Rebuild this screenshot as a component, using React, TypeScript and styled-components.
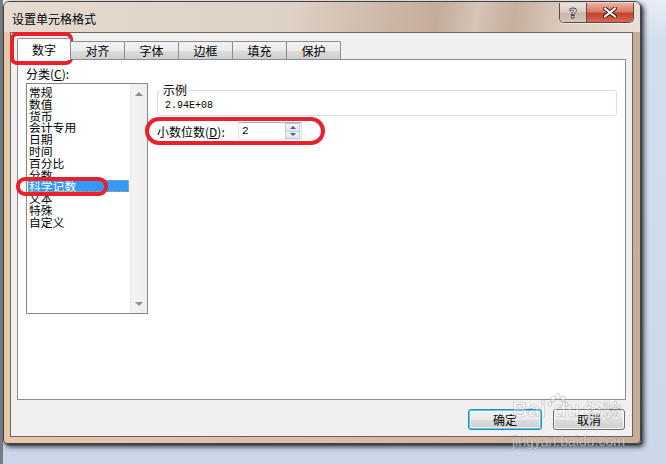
import React from "react";
import styled, { createGlobalStyle } from "styled-components";

const cjk = `"Noto Sans CJK SC", "Liberation Sans", sans-serif`;

const GlobalStyle = createGlobalStyle`
  html, body {
    margin: 0;
    padding: 0;
    background: #cdd9ea;
  }
  body {
    font-family: ${cjk};
    font-size: 12px;
    color: #000;
  }
  * {
    box-sizing: border-box;
  }
`;

const Desktop = styled.div`
  position: relative;
  width: 666px;
  height: 464px;
  overflow: hidden;
  padding: 1px 0 0 3px;
  background: linear-gradient(to right, #757c85 0 3px, transparent 3px),
    linear-gradient(to bottom, #e8edf4 0, #d3deed 40px, #cbd7e9 100%);
`;

const Window = styled.div`
  width: 638px;
  height: 443px;
  display: flex;
  flex-direction: column;
  border: 1px solid #4b403a;
  border-radius: 6px 6px 4px 4px;
  background: linear-gradient(to right, #e6c8aa 0, #d9bfa9 50%, #c8ad99 100%);
  box-shadow: 3px 3px 5px rgba(25, 30, 45, 0.8), 1px 1px 2px rgba(25, 30, 45, 0.6);
`;

const TitleBar = styled.div`
  height: 30px;
  display: flex;
  align-items: flex-start;
  padding: 0 6px 0 8px;
  border-radius: 5px 5px 0 0;
  background: linear-gradient(
    100deg,
    #e6dbd1 0%,
    #ded1c5 45%,
    #cdb8a8 60%,
    #c4ac9a 68%,
    #d6c4b6 74%,
    #c6af9d 80%,
    #dccdc0 88%,
    #e9e0d8 100%
  );
`;

const Title = styled.div`
  padding-top: 9px;
  font-size: 12px;
  line-height: 16px;
  color: #000;
`;

const CaptionGroup = styled.div`
  margin-left: auto;
  margin-top: 1px;
  display: flex;
  height: 20px;
  border: 1px solid #5b4a40;
  border-top: none;
  border-radius: 0 0 5px 5px;
  overflow: hidden;
  box-shadow: 0 1px 0 rgba(255, 255, 255, 0.5);
`;

const CaptionButton = styled.div<{ $close?: boolean }>`
  width: ${(p) => (p.$close ? 47 : 26)}px;
  display: flex;
  align-items: center;
  justify-content: center;
  border-left: ${(p) => (p.$close ? "1px solid #5b4a40" : "none")};
  background: ${(p) =>
    p.$close
      ? "linear-gradient(to bottom, #eab1a4 0%, #d9796a 45%, #c4402f 55%, #d56a52 100%)"
      : "linear-gradient(to bottom, #ece4dd 0%, #d9cdc3 45%, #c9b8aa 55%, #d4c6ba 100%)"};
`;

const HelpGlyph = styled.span`
  font-family: "DejaVu Sans", sans-serif;
  font-weight: bold;
  font-size: 14px;
  line-height: 14px;
  color: #fff;
  -webkit-text-stroke: 0.8px #3c3c44;
`;

const Client = styled.div`
  flex: 1;
  margin: 0 7px 6px 6px;
  border: 1px solid #6e625a;
  background: #f0f0f0;
  display: flex;
  flex-direction: column;
  padding: 5px 6px 0 6px;
`;

const TabRow = styled.div`
  height: 21px;
  display: flex;
  align-items: flex-end;
`;

const Tab = styled.div<{ $active?: boolean }>`
  position: relative;
  width: ${(p) => (p.$active ? 54 : 55)}px;
  height: ${(p) => (p.$active ? 22 : 18)}px;
  margin-left: ${(p) => (p.$active ? 0 : -1)}px;
  margin-bottom: ${(p) => (p.$active ? -1 : 0)}px;
  z-index: ${(p) => (p.$active ? 2 : 1)};
  border: 1px solid #898c95;
  border-bottom: none;
  border-radius: 2px 2px 0 0;
  display: flex;
  align-items: center;
  justify-content: center;
  font-size: 12px;
  background: ${(p) =>
    p.$active
      ? "#ffffff"
      : "linear-gradient(to bottom, #f3f3f3 0%, #ebebeb 50%, #dddddd 51%, #cfcfcf 100%)"};
`;

const Panel = styled.div`
  height: 341px;
  border: 1px solid #898c95;
  background: #fff;
  display: flex;
  padding: 0 8px;
`;

const LeftCol = styled.div`
  padding-top: 7px;
  display: flex;
  flex-direction: column;
`;

const FieldLabel = styled.div`
  font-size: 12px;
  line-height: 14px;
  height: 14px;
  white-space: nowrap;
`;

const ListBox = styled.div`
  margin-top: 2px;
  width: 122px;
  height: 231px;
  border: 1px solid #828790;
  display: flex;
`;

const ListItems = styled.div`
  flex: 1;
  padding: 2px 1px 0 1px;
`;

const ListItem = styled.div<{ $selected?: boolean }>`
  height: 11.8px;
  line-height: 11.8px;
  font-size: 11.8px;
  padding-left: 1px;
  white-space: nowrap;
  color: ${(p) => (p.$selected ? "#fff" : "#000")};
  background: ${(p) => (p.$selected ? "#3399ff" : "transparent")};
  outline: ${(p) => (p.$selected ? "1px dotted #d6a35a" : "none")};
  outline-offset: -1px;
`;

const ScrollBar = styled.div`
  width: 17px;
  display: flex;
  flex-direction: column;
  justify-content: space-between;
  align-items: center;
  padding: 8px 0 7px;
  background: linear-gradient(to right, #e9e9e9 0, #f3f3f3 2px, #eeeeee 100%);
`;

const Arrow = styled.div<{ $down?: boolean }>`
  width: 0;
  height: 0;
  border-left: 4px solid transparent;
  border-right: 4px solid transparent;
  ${(p) =>
    p.$down
      ? "border-top: 4px solid #8d8d8d;"
      : "border-bottom: 4px solid #8d8d8d;"}
`;

const RightCol = styled.div`
  flex: 1;
  margin-left: 9px;
  padding-top: 23px;
  display: flex;
  flex-direction: column;
`;

const GroupBox = styled.fieldset`
  margin: 0;
  padding: 3px 8px 3px 7px;
  border: 1px solid #d5dfe5;
  border-radius: 3px;
  min-width: 0;
`;

const Legend = styled.legend`
  margin-left: -4px;
  padding: 0 2px;
  font-size: 12px;
  line-height: 14px;
`;

const Sample = styled.div`
  font-family: "Liberation Mono", "DejaVu Sans Mono", monospace;
  font-size: 10px;
  line-height: 12px;
  height: 12px;
`;

const DecimalRow = styled.div`
  margin-top: 6px;
  height: 18px;
  display: flex;
  align-items: center;
`;

const DecimalLabel = styled.div`
  width: 81px;
  font-size: 12px;
  white-space: nowrap;
`;

const SpinBox = styled.div`
  width: 64px;
  height: 18px;
  display: flex;
  border: 1px solid #abadb3;
  border-color: #abadb3 #dbdfe6 #e3e9ef #e2e3ea;
  background: #fff;
`;

const SpinValue = styled.div`
  flex: 1;
  padding-left: 3px;
  font-family: "Liberation Mono", "DejaVu Sans Mono", monospace;
  font-size: 11px;
  line-height: 16px;
`;

const SpinButtons = styled.div`
  width: 15px;
  margin: 0 1px 0 0;
  display: flex;
  flex-direction: column;
`;

const SpinHalf = styled.div<{ $down?: boolean }>`
  flex: 1;
  display: flex;
  align-items: center;
  justify-content: center;
  border: 1px solid #c2cbd8;
  ${(p) => (p.$down ? "border-top: none;" : "")}
  background: linear-gradient(to bottom, #f4f6fa, #dfe6ef);
`;

const SpinTri = styled.div<{ $down?: boolean }>`
  width: 0;
  height: 0;
  border-left: 3px solid transparent;
  border-right: 3px solid transparent;
  ${(p) =>
    p.$down
      ? "border-top: 3px solid #4a5f86;"
      : "border-bottom: 3px solid #4a5f86;"}
`;

const ButtonRow = styled.div`
  display: flex;
  justify-content: flex-end;
  gap: 11px;
  padding: 9px 1px 0 0;
`;

const Button = styled.div<{ $default?: boolean; $w: number }>`
  width: ${(p) => p.$w}px;
  height: 21px;
  display: flex;
  align-items: center;
  justify-content: center;
  font-size: 12px;
  border: 1px solid ${(p) => (p.$default ? "#3c7fb1" : "#707070")};
  border-radius: 3px;
  background: linear-gradient(to bottom, #f2f2f2 0%, #ebebeb 50%, #dddddd 51%, #cfcfcf 100%);
  box-shadow: ${(p) =>
    p.$default
      ? "inset 0 0 0 1px #48d1fb, inset 0 0 0 2px rgba(255,255,255,0.6)"
      : "inset 0 0 0 1px rgba(255,255,255,0.8)"};
`;

const Mark = styled.div<{ $x: number; $y: number; $w: number; $h: number; $r: number }>`
  position: absolute;
  left: ${(p) => p.$x}px;
  top: ${(p) => p.$y}px;
  width: ${(p) => p.$w}px;
  height: ${(p) => p.$h}px;
  border: 4px solid #e8222c;
  border-radius: ${(p) => p.$r}px;
  pointer-events: none;
`;

const Watermark = styled.div`
  position: absolute;
  left: 512px;
  top: 393px;
  display: flex;
  align-items: flex-end;
  pointer-events: none;
  font-family: "Liberation Sans", sans-serif;
  font-weight: bold;
  font-size: 22px;
  line-height: 34px;
  height: 34px;
  color: rgba(255, 255, 255, 0.4);
  -webkit-text-stroke: 0.6px rgba(110, 110, 110, 0.4);
`;

const PawBox = styled.span`
  align-self: flex-start;
  margin: 0 -16px 0 1px;
  display: flex;
`;

const WatermarkCjk = styled.span`
  font-family: ${cjk};
  font-size: 19px;
  margin-left: 3px;
`;

const WatermarkUrl = styled.div`
  position: absolute;
  left: 512px;
  top: 434px;
  pointer-events: none;
  font-family: "Liberation Sans", sans-serif;
  font-size: 14px;
  line-height: 15px;
  color: rgba(255, 255, 255, 0.6);
  -webkit-text-stroke: 0.5px rgba(110, 110, 110, 0.45);
`;

const categories = [
  "常规",
  "数值",
  "货币",
  "会计专用",
  "日期",
  "时间",
  "百分比",
  "分数",
  "科学记数",
  "文本",
  "特殊",
  "自定义",
];

const tabs = ["数字", "对齐", "字体", "边框", "填充", "保护"];

const Paw = () => (
  <svg width="22" height="18" viewBox="0 0 30 24">
    <g fill="rgba(255,255,255,0.4)" stroke="rgba(110,110,110,0.45)" strokeWidth="1">
      <ellipse cx="8" cy="8" rx="3" ry="4" />
      <ellipse cx="15" cy="4.5" rx="3" ry="4" />
      <ellipse cx="22" cy="8" rx="3" ry="4" />
      <ellipse cx="4" cy="15" rx="2.5" ry="3.2" />
      <ellipse cx="26" cy="15" rx="2.5" ry="3.2" />
    </g>
  </svg>
);

const CloseGlyph = () => (
  <svg width="14" height="11" viewBox="0 0 14 11">
    <path d="M2 1.5L12 9.5M12 1.5L2 9.5" stroke="#3b1c18" strokeWidth="4" strokeLinecap="square" />
    <path d="M2 1.5L12 9.5M12 1.5L2 9.5" stroke="#ffffff" strokeWidth="2" strokeLinecap="square" />
  </svg>
);

export default function App() {
  return (
    <>
      <GlobalStyle />
      <Desktop>
        <Window>
          <TitleBar>
            <Title>设置单元格格式</Title>
            <CaptionGroup>
              <CaptionButton>
                <HelpGlyph>?</HelpGlyph>
              </CaptionButton>
              <CaptionButton $close>
                <CloseGlyph />
              </CaptionButton>
            </CaptionGroup>
          </TitleBar>
          <Client>
            <TabRow>
              {tabs.map((t, i) => (
                <Tab key={t} $active={i === 0}>
                  {t}
                </Tab>
              ))}
            </TabRow>
            <Panel>
              <LeftCol>
                <FieldLabel>
                  分类(<u>C</u>):
                </FieldLabel>
                <ListBox>
                  <ListItems>
                    {categories.map((c) => (
                      <ListItem key={c} $selected={c === "科学记数"}>
                        {c}
                      </ListItem>
                    ))}
                  </ListItems>
                  <ScrollBar>
                    <Arrow />
                    <Arrow $down />
                  </ScrollBar>
                </ListBox>
              </LeftCol>
              <RightCol>
                <GroupBox>
                  <Legend>示例</Legend>
                  <Sample>2.94E+08</Sample>
                </GroupBox>
                <DecimalRow>
                  <DecimalLabel>
                    小数位数(<u>D</u>):
                  </DecimalLabel>
                  <SpinBox>
                    <SpinValue>2</SpinValue>
                    <SpinButtons>
                      <SpinHalf>
                        <SpinTri />
                      </SpinHalf>
                      <SpinHalf $down>
                        <SpinTri $down />
                      </SpinHalf>
                    </SpinButtons>
                  </SpinBox>
                </DecimalRow>
              </RightCol>
            </Panel>
            <ButtonRow>
              <Button $default $w={74}>
                确定
              </Button>
              <Button $w={72}>取消</Button>
            </ButtonRow>
          </Client>
        </Window>
        <Mark $x={10} $y={32} $w={63} $h={33} $r={7} />
        <Mark $x={16} $y={177} $w={92} $h={19} $r={9} />
        <Mark $x={145} $y={117} $w={180} $h={28} $r={14} />
        <Watermark>
          <span>Bai</span>
          <PawBox>
            <Paw />
          </PawBox>
          <span>du</span>
          <WatermarkCjk>经验</WatermarkCjk>
        </Watermark>
        <WatermarkUrl>jingyan.baidu.com</WatermarkUrl>
      </Desktop>
    </>
  );
}
